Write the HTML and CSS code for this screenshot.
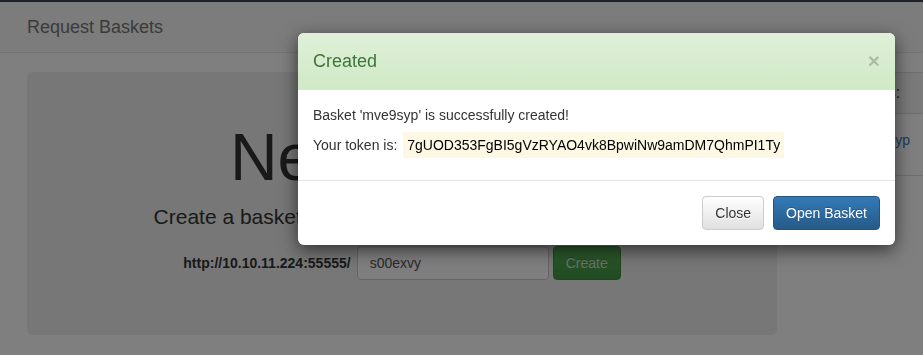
FILE: index.html
```html
<!DOCTYPE html>
<html>
  <head>
    <title>Request Baskets</title>
    <link rel="stylesheet" href="styles.css">
  </head>

  <body>
    <nav class="navbar">
      <span class="brand">Request Baskets</span>
    </nav>

    <div class="main">
      <div class="jumbotron">
        <h1>New Basket</h1>
        <p class="lead">Create a basket to collect and inspect HTTP requests</p>
        <form class="basket-form">
          <label for="basket_name">http://10.10.11.224:55555/</label>
          <input id="basket_name" class="form-control" type="text" value="s00exvy" />
          <button type="button" class="btn btn-success">Create</button>
        </form>
      </div>

      <div class="panel">
        <div class="panel-heading">My Baskets:</div>
        <div class="panel-body">
          <a class="basket-link" href="#">mve9syp</a>
        </div>
      </div>
    </div>

    <!-- modal over a dimmed page -->
    <div class="backdrop"></div>
    <div class="modal">
      <div class="modal-header">
        <span class="close">&times;</span>
        <h4 class="modal-title">Created</h4>
      </div>
      <div class="modal-body">
        <p>Basket 'mve9syp' is successfully created!</p>
        <p>Your token is: <mark class="token">7gUOD353FgBI5gVzRYAO4vk8BpwiNw9amDM7QhmPI1Ty</mark></p>
      </div>
      <div class="modal-footer">
        <button type="button" class="btn btn-default">Close</button>
        <button type="button" class="btn btn-primary">Open Basket</button>
      </div>
    </div>
  </body>
</html>
```

FILE: styles.css
```css
body {
  margin: 0;
  font-family: "Liberation Sans", Arial, sans-serif;
  font-size: 14px;
  line-height: 20px;
  color: #333;
  background: #fff;
}

.navbar {
  height: 50px;
  border-top: 2px solid #3a4552;
  border-bottom: 1px solid #e7e7e7;
  background: #f8f8f8;
  padding: 0 27px;
}
.brand {
  font-size: 18px;
  line-height: 50px;
  color: #777;
}

.main {
  display: flex;
  gap: 20px;
  padding: 19px 0 0 27px;
}

.jumbotron {
  flex: none;
  width: 750px;
  height: 214px;
  padding-top: 49px;
  background: #eee;
  border-radius: 6px;
  text-align: center;
}
.jumbotron h1 {
  margin: 0 0 8px 8px;
  font-size: 66px;
  line-height: 73px;
  font-weight: normal;
  color: #333;
}
.lead {
  margin: 0 0 14px;
  font-size: 21px;
  line-height: 30px;
}
.basket-form {
  display: flex;
  justify-content: center;
  align-items: center;
}
.basket-form label {
  font-weight: bold;
  margin-right: 6px;
}
.form-control {
  box-sizing: border-box;
  width: 192px;
  height: 34px;
  padding: 6px 12px;
  font: inherit;
  color: #555;
  border: 1px solid #ccc;
  border-radius: 4px;
  box-shadow: inset 0 1px 1px rgba(0, 0, 0, 0.075);
}

.btn {
  height: 34px;
  padding: 6px 12px;
  font: inherit;
  line-height: 20px;
  border: 1px solid transparent;
  border-radius: 4px;
  text-shadow: 0 -1px 0 rgba(0, 0, 0, 0.2);
}
.btn-success {
  margin-left: 4px;
  color: #d6e9d6;
  background: linear-gradient(#5cb85c, #419641);
  border-color: #3e8f3e;
}
.btn-default {
  color: #333;
  text-shadow: 0 1px 0 #fff;
  background: linear-gradient(#fff, #e0e0e0);
  border-color: #ccc;
}
.btn-primary {
  color: #fff;
  background: linear-gradient(#337ab7, #265a88);
  border-color: #245580;
}

.panel {
  flex: 1;
  height: 102px;
  background: #fff;
  border: 1px solid #ddd;
  border-right: none;
  border-radius: 4px 0 0 4px;
}
.panel-heading {
  padding: 10px 15px;
  height: 20px;
  font-size: 16px;
  background: #f5f5f5;
  border-bottom: 1px solid #ddd;
}
.panel-body {
  padding: 16px 15px 0 56px;
}
.basket-link {
  font-size: 14px;
  color: #337ab7;
  text-decoration: none;
}

.backdrop {
  position: fixed;
  inset: 0;
  background: rgba(0, 0, 0, 0.5);
}

.modal {
  position: absolute;
  left: 298px;
  top: 33px;
  width: 597px;
  background: #fff;
  border-radius: 6px;
  box-shadow: 0 5px 18px rgba(0, 0, 0, 0.6);
}
.modal-header {
  padding: 15px;
  background: linear-gradient(#dff0d8, #d0e9c6);
  border-bottom: 1px solid #d6e9c6;
  border-radius: 6px 6px 0 0;
}
.modal-title {
  margin: 0;
  font-size: 18px;
  line-height: 26px;
  font-weight: normal;
  color: #3c763d;
}
.close {
  float: right;
  font-size: 21px;
  line-height: 26px;
  font-weight: bold;
  color: #000;
  opacity: 0.2;
}
.modal-body {
  padding: 15px;
}
.modal-body p {
  margin: 0 0 10px;
}
.token {
  margin-left: 2px;
  padding: 5px 4px;
  background: #fcf8e3;
  color: #000;
}
.modal-footer {
  display: flex;
  justify-content: flex-end;
  gap: 9px;
  padding: 15px;
  border-top: 1px solid #e5e5e5;
}
```
